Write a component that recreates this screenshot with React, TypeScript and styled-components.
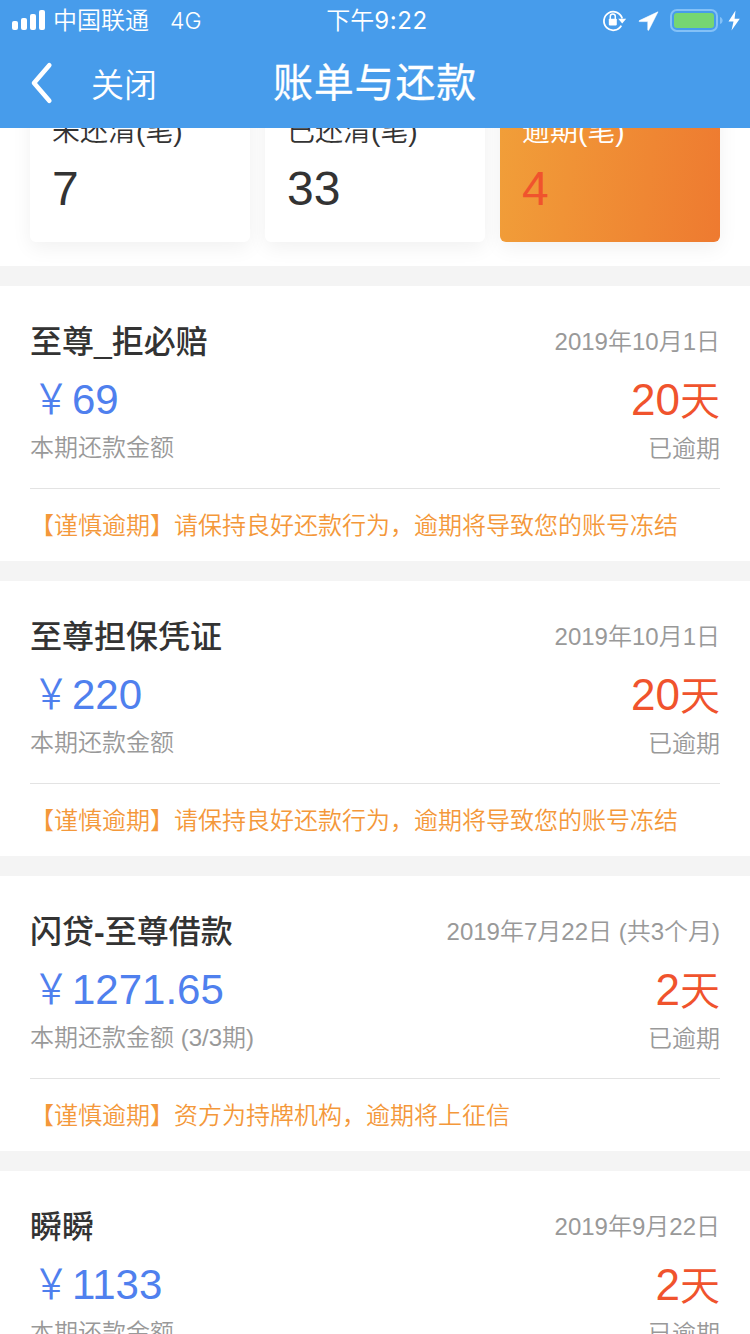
import React from "react";
import styled, { createGlobalStyle } from "styled-components";

const GlobalStyle = createGlobalStyle`
  * { box-sizing: border-box; }
  body {
    margin: 0;
    background: #f4f4f4;
    font-family: "Liberation Sans", "Noto Sans CJK SC", sans-serif;
    font-weight: 350;
  }
`;

const Screen = styled.main`
  display: flex;
  flex-direction: column;
  width: 750px;
  height: 1334px;
  overflow: hidden;
  background: #f4f4f4;
`;

const Header = styled.header`
  position: relative;
  z-index: 2;
  flex: none;
  height: 128px;
  background: #479ceb;
  color: #fff;
`;

const StatusBar = styled.div`
  display: grid;
  grid-template-columns: 1fr auto 1fr;
  align-items: center;
  height: 40px;
  padding: 0 10px 0 12px;
  font-family: Inter, "Noto Sans CJK SC", sans-serif;
  font-size: 24px;
  line-height: 38px;
`;

const Carrier = styled.div`
  display: flex;
  align-items: center;
  svg { flex: none; margin-right: 8px; }
`;

const StatusText = styled.span`
  padding-top: 2px;
`;

const Network = styled.span`
  margin-left: 21px;
  padding-top: 1px;
  font-size: 23px;
  font-weight: 300;
`;

const Clock = styled.div`
  display: flex;
  margin-left: 2px;
`;

const ClockDigits = styled.span`
  padding-top: 2px;
  font-size: 24px;
  font-weight: 400;
  letter-spacing: 0.6px;
`;

const StatusIcons = styled.div`
  display: flex;
  justify-content: flex-end;
  align-items: center;
`;

const NavBar = styled.nav`
  display: grid;
  grid-template-columns: 1fr auto 1fr;
  align-items: center;
  height: 88px;
  padding: 0 30px;
`;

const NavLeft = styled.div`
  display: flex;
  align-items: center;
  svg { flex: none; margin-top: -2px; }
`;

const CloseButton = styled.button`
  margin: 3px 0 0 38px;
  padding: 0;
  border: 0;
  background: none;
  color: #fff;
  font: inherit;
  font-size: 33px;
  line-height: 48px;
`;

const PageTitle = styled.h1`
  margin: 0;
  padding-bottom: 2px;
  font-size: 40px;
  font-weight: 400;
  line-height: 60px;
  letter-spacing: 0.8px;
  -webkit-text-stroke: 0.3px #fff;
`;

const Stats = styled.section`
  display: flex;
  flex: none;
  gap: 15px;
  margin-top: -40px;
  padding: 0 30px 24px;
  background: #fff;
`;

const StatCard = styled.div<{ $active?: boolean }>`
  flex: 1;
  height: 154px;
  padding: 22px 22px 0;
  border-radius: 6px;
  background: ${(p) => (p.$active ? "linear-gradient(97deg, #f19f39, #ee7a30)" : "#fff")};
  color: ${(p) => (p.$active ? "#fff" : "#333")};
  box-shadow: 0 6px 20px rgba(0, 0, 0, 0.06);
`;

const StatLabel = styled.div`
  font-size: 28px;
  line-height: 44px;
`;

const StatValue = styled.div<{ $alert?: boolean }>`
  font-size: 48px;
  line-height: 70px;
  color: ${(p) => (p.$alert ? "#f0532d" : "#333")};
`;

const BillCard = styled.article`
  flex: none;
  height: 275px;
  margin-top: 20px;
  padding: 34px 30px 0;
  background: #fff;
`;

const Row = styled.div<{ $height: number }>`
  display: flex;
  justify-content: space-between;
  align-items: flex-start;
  height: ${(p) => p.$height}px;
  white-space: nowrap;
`;

const BillName = styled.h2`
  margin: 0;
  color: #333;
  font-size: 32px;
  font-weight: 500;
  line-height: 45px;
`;

const Hyphen = styled.span`
  font-weight: 700;
`;

const BillDate = styled.span`
  color: #999;
  font-size: 24px;
  line-height: 43px;
`;

const Amount = styled.span`
  color: #4f80ee;
  font-size: 42px;
  line-height: 74px;
`;

const YuanSign = styled.span`
  display: inline-block;
  transform: scaleX(0.86);
`;

const Days = styled.span`
  color: #f0532d;
  font-size: 44px;
  line-height: 74px;
`;

const DayUnit = styled.span`
  font-size: 40px;
  line-height: 1;
`;

const Caption = styled.span<{ $drop?: boolean }>`
  padding-top: ${(p) => (p.$drop ? 1 : 0)}px;
  color: #999;
  font-size: 24px;
  line-height: 24px;
`;

const Warning = styled.p`
  margin: 0;
  border-top: 1px solid #e3e3e3;
  color: #f4983a;
  font-size: 24px;
  line-height: 73px;
  white-space: nowrap;
`;

type Bill = {
  name: string;
  date: string;
  amount: string;
  caption: string;
  days: number;
  warning: string;
};

const ACCOUNT_WARNING = "【谨慎逾期】请保持良好还款行为，逾期将导致您的账号冻结";

const bills: Bill[] = [
  { name: "至尊_拒必赔", date: "2019年10月1日", amount: "69", caption: "本期还款金额", days: 20, warning: ACCOUNT_WARNING },
  { name: "至尊担保凭证", date: "2019年10月1日", amount: "220", caption: "本期还款金额", days: 20, warning: ACCOUNT_WARNING },
  {
    name: "闪贷-至尊借款",
    date: "2019年7月22日 (共3个月)",
    amount: "1271.65",
    caption: "本期还款金额 (3/3期)",
    days: 2,
    warning: "【谨慎逾期】资方为持牌机构，逾期将上征信",
  },
  { name: "瞬瞬", date: "2019年9月22日", amount: "1133", caption: "本期还款金额", days: 2, warning: ACCOUNT_WARNING },
];

const SignalIcon = () => (
  <svg width="33" height="20" viewBox="0 0 33 20" fill="#fff">
    <rect x="0" y="11" width="6" height="9" rx="2" />
    <rect x="9" y="8" width="6" height="12" rx="2" />
    <rect x="18" y="4" width="6" height="16" rx="2" />
    <rect x="27" y="0" width="6" height="20" rx="2" />
  </svg>
);

const StatusGlyphs = () => (
  <svg width="138" height="28" viewBox="0 0 138 28">
    <g fill="none" stroke="#fff" strokeWidth="1.8">
      <path d="M19.3 19.6A9.3 9.3 0 1 1 20.2 12.5" />
      <path d="M8.3 13.5v-3a2.5 2.5 0 0 1 5 0v3" strokeWidth="1.5" />
    </g>
    <rect x="6.8" y="12.8" width="8" height="6.6" rx="0.8" fill="#fff" />
    <path d="M16.2 12.8h8l-4 4.6z" fill="#fff" />
    <path d="M56 5.8 37.4 14.6c-.7.4-.4 1 .2 1h8.2v8.2c0 .7.7.9 1 .2z" fill="#fff" stroke="#fff" strokeWidth="0.6" />
    <rect x="69" y="4" width="46" height="21" rx="6" fill="none" stroke="#84c1f7" strokeWidth="2" />
    <rect x="72" y="7" width="40" height="15" rx="3" fill="#76d672" />
    <path d="M118 11c3.5 1 3.5 6 0 7z" fill="#84c1f7" />
    <path d="M133.5 4.5 126.5 15.5h5l-2 9 8.3-11.8h-5.2z" fill="#fff" />
  </svg>
);

const BackIcon = () => (
  <svg width="23" height="42" viewBox="0 0 23 42" fill="none">
    <path d="M19.3 3.3 4 21l15.3 17.7" stroke="#fff" strokeWidth="4.6" strokeLinecap="round" strokeLinejoin="round" />
  </svg>
);

const BillItem = ({ bill }: { bill: Bill }) => (
  <BillCard>
    <Row $height={43}>
      <BillName>
        {bill.name.split(/(-)/).map((part, i) => (part === "-" ? <Hyphen key={i}>-</Hyphen> : part))}
      </BillName>
      <BillDate>{bill.date}</BillDate>
    </Row>
    <Row $height={73}>
      <Amount>
        <YuanSign>￥</YuanSign>
        {bill.amount}
      </Amount>
      <Days>
        {bill.days}
        <DayUnit>天</DayUnit>
      </Days>
    </Row>
    <Row $height={52}>
      <Caption>{bill.caption}</Caption>
      <Caption $drop>已逾期</Caption>
    </Row>
    <Warning>{bill.warning}</Warning>
  </BillCard>
);

export default function App() {
  return (
    <Screen lang="zh-CN">
      <GlobalStyle />
      <Header>
        <StatusBar>
          <Carrier>
            <SignalIcon />
            <StatusText>中国联通</StatusText>
            <Network>4G</Network>
          </Carrier>
          <Clock>
            <StatusText>下午</StatusText>
            <ClockDigits>9:22</ClockDigits>
          </Clock>
          <StatusIcons>
            <StatusGlyphs />
          </StatusIcons>
        </StatusBar>
        <NavBar>
          <NavLeft>
            <BackIcon />
            <CloseButton>关闭</CloseButton>
          </NavLeft>
          <PageTitle>账单与还款</PageTitle>
          <span />
        </NavBar>
      </Header>
      <Stats>
        <StatCard>
          <StatLabel>未还清(笔)</StatLabel>
          <StatValue>7</StatValue>
        </StatCard>
        <StatCard>
          <StatLabel>已还清(笔)</StatLabel>
          <StatValue>33</StatValue>
        </StatCard>
        <StatCard $active>
          <StatLabel>逾期(笔)</StatLabel>
          <StatValue $alert>4</StatValue>
        </StatCard>
      </Stats>
      {bills.map((bill) => (
        <BillItem key={bill.name} bill={bill} />
      ))}
    </Screen>
  );
}
